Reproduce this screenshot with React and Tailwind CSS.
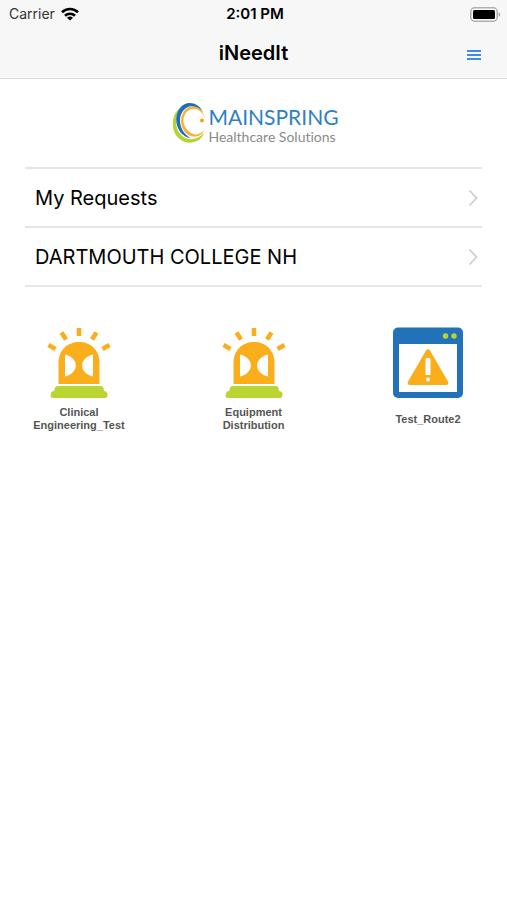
import { clsx } from "clsx";

const links = ["My Requests", "DARTMOUTH COLLEGE NH"];

const routes = [
    { lines: ["Clinical", "Engineering_Test"], icon: SirenIcon },
    { lines: ["Equipment", "Distribution"], icon: SirenIcon },
    { lines: ["Test_Route2"], icon: WindowIcon },
];

function WifiIcon() {
    return (
        <svg viewBox="0 0 18 14" className="h-[14px] w-[18px]" aria-hidden="true">
            <g fill="none" stroke="#000" strokeWidth="2.6">
                <path d="M1 5.3C5.5 0.9 12.5 0.9 17 5.3" />
                <path d="M4 8.7C6.8 6 11.2 6 14 8.7" />
            </g>
            <path d="M9 13.6 6 10.7C7.7 9.1 10.3 9.1 12 10.7Z" />
        </svg>
    );
}

function BatteryIcon() {
    return (
        <svg viewBox="0 0 31 15" className="h-[15px] w-[31px]" aria-hidden="true">
            <rect x="0.8" y="0.8" width="26.4" height="13.4" rx="4" fill="#f8f8f8" stroke="#b0b0b0" strokeWidth="1.5" />
            <rect x="3" y="3" width="22" height="9" rx="1.5" />
            <path d="M28.6 5.2C30.8 6 30.8 9 28.6 9.8Z" fill="#aaa" />
        </svg>
    );
}

function LogoMark() {
    return (
        <svg viewBox="0 0 34 42" className="h-[42px] w-[34px]" aria-hidden="true">
            <path d="M8 6C-3 14-2 37 15 40.500C23 41.500 29 38 32.500 31C27 36 21 38.500 15 36.500C3 33 1 15 8 6Z" fill="#b5d334" />
            <path d="M31 10C26 0 14-2 8 6C0 16 5 34 19 36.500C8 30 5 17 11 9C16 2 25 3 31 10Z" fill="#1f6fb8" />
            <path d="M32.500 16C31 5 20 1 13 8C5 17 10 33 21 34.500C26 35 30 33 32 28.500C28 32 24 33.500 20 31.500C11 27 9 17 14.500 10C20 4.500 29 6 32.500 16Z" fill="#fbb030" />
            <circle cx="30" cy="18.500" r="2" fill="#f9a11b" />
        </svg>
    );
}

function SirenIcon() {
    return (
        <svg viewBox="0 0 72 72" className="h-[72px] w-[72px]" aria-hidden="true">
            <g stroke="#fbae1c" strokeWidth="4.6">
                <path d="M36 1v8M18.5 5.5l4.5 7M53.5 5.5l-4.5 7M5.5 18l7 4M66.5 18l-7 4" />
            </g>
            <path d="M15.5 57V36C15.5 23 24.5 15 36 15S56.5 23 56.5 36V57Z" fill="#fbae1c" />
            <path d="M22 27.5C36.5 31 36.500 46 22 49.500ZM50 27.5C35.500 31 35.500 46 50 49.500Z" fill="#fff" />
            <path d="M14.500 59H58Q60 59 60.500 61L61 64Q64 64 64.500 67V68Q64.500 71 62 71H10Q7.500 71 7.500 69L8 66Q8.500 64 11 64L12 61Q12.500 59 14.500 59Z" fill="#b9d533" />
        </svg>
    );
}

function WindowIcon() {
    return (
        <svg viewBox="0 0 72 72" className="h-[72px] w-[72px]" aria-hidden="true">
            <rect x="1" y="0.5" width="70" height="70.5" rx="5" fill="#2272b9" />
            <path d="M7 17H65V65H7Z" fill="#fff" />
            <circle cx="53.5" cy="9" r="2.7" fill="#b9d533" />
            <circle cx="62" cy="9" r="2.7" fill="#b9d533" />
            <path d="M34 23.5Q36 20.500 38 23.500L56 54.500Q57 58 54 58H18Q15 58 16 54.500Z" fill="#fbae1c" />
            <path d="M33.5 32Q33.5 31 36 31T38.5 32V48H33.5Z" fill="#fff" />
            <circle cx="36" cy="52.5" r="2" fill="#fff" />
        </svg>
    );
}

function Chevron() {
    return (
        <svg viewBox="0 0 10 18" className="h-[18px] w-[10px]" fill="none" stroke="#cfcfd3" strokeWidth="1.8" aria-hidden="true">
            <path d="M1.5 1.5 8.5 9l-7 7.5" />
        </svg>
    );
}

export default function App() {
    return (
        <div className="min-h-screen bg-white font-['Inter','Liberation_Sans',sans-serif] text-black">
            <header className="border-b border-[#dcdcdc] bg-[#f7f7f7]">
                {/* Status bar */}
                <div className="grid h-7 grid-cols-3 items-center pr-[6px] pl-[9px] text-sm">
                    <div className="flex items-center gap-[6px] text-[#333]">
                        <span>Carrier</span>
                        <WifiIcon />
                    </div>
                    <span className="text-center text-[15px] font-semibold">2:01 PM</span>
                    <div className="flex justify-end">
                        <BatteryIcon />
                    </div>
                </div>

                {/* Title bar */}
                <div className="grid h-[50px] grid-cols-[1fr_auto_1fr] items-center px-[26px]">
                    <h1 className="col-start-2 text-xl font-semibold">iNeedIt</h1>
                    <button type="button" aria-label="Menu" className="flex w-[14px] flex-col gap-[2px] justify-self-end pt-1">
                        <span className="h-[2px] w-full bg-[#3b8ee8]" />
                        <span className="h-[2px] w-full bg-[#3b8ee8]" />
                        <span className="h-[2px] w-full bg-[#3b8ee8]" />
                    </button>
                </div>
            </header>

            <main className="px-[25px]">
                <div className="flex h-[88px] items-center justify-center gap-[2px] pl-1">
                    <LogoMark />
                    <div className="pt-1 font-['Lato',sans-serif] [font-variant-ligatures:none]">
                        <p className="text-[21px] leading-6 text-[#2f7fc3]">MAINSPRING</p>
                        <p className="text-sm leading-4 text-[#8a8a8a]">Healthcare Solutions</p>
                    </div>
                </div>

                <nav className="border-t-2 border-[#e6e6e6]">
                    {links.map((label) => (
                        <a
                            key={label}
                            href="#"
                            className="flex h-[59px] items-center justify-between border-b-2 border-[#e6e6e6] pr-1 pl-[10px] text-xl"
                        >
                            {label}
                            <Chevron />
                        </a>
                    ))}
                </nav>

                <div className="flex justify-between pt-10">
                    {routes.map(({ lines, icon: Icon }) => (
                        <button key={lines[0]} type="button" className="flex w-[108px] flex-col items-center gap-[7px]">
                            <Icon />
                            <span
                                className={clsx(
                                    "flex h-[26px] flex-col justify-center text-center",
                                    "font-['Liberation_Sans',sans-serif] text-[11px] leading-[13px] font-bold text-[#555]"
                                )}
                            >
                                {lines.map((line) => (
                                    <span key={line}>{line}</span>
                                ))}
                            </span>
                        </button>
                    ))}
                </div>
            </main>
        </div>
    );
}
